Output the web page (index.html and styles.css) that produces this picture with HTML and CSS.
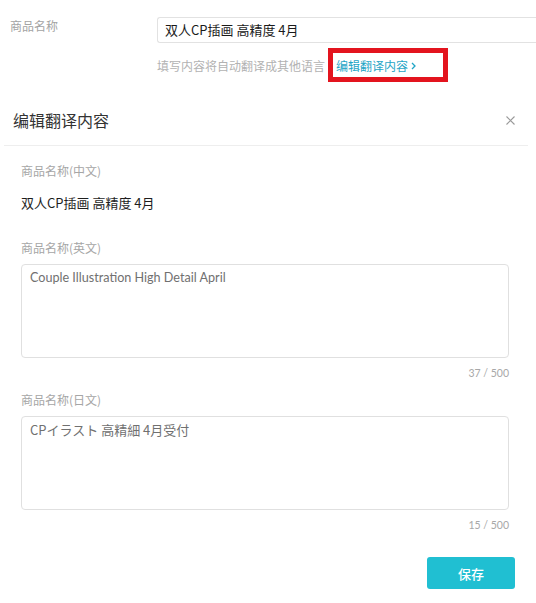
FILE: index.html
```html
<!DOCTYPE html>
<html lang="zh-CN">
<head>
<meta charset="utf-8">
<title>编辑翻译内容</title>
<link rel="stylesheet" href="styles.css">
</head>
<body>
  <div class="field-row">
    <div class="field-label">商品名称</div>
    <div class="field-input">双人CP插画 高精度 4月</div>
  </div>
  <div class="hint-row">
    <span class="hint">填写内容将自动翻译成其他语言</span>
    <span class="link-wrap">
      <a class="link">编辑翻译内容<svg class="chev" width="5" height="8" viewBox="0 0 5 8"><polyline points="1,1 4,4 1,7" fill="none" stroke="currentColor" stroke-width="1.3"/></svg></a>
      <span class="annot"></span>
    </span>
  </div>

  <div class="modal">
    <div class="modal-head">
      <div class="modal-title">编辑翻译内容</div>
      <svg class="close" width="9" height="9" viewBox="0 0 9 9"><path d="M0.5 0.5 L8.5 8.5 M8.5 0.5 L0.5 8.5" stroke="#9a9a9a" stroke-width="1.1" fill="none"/></svg>
    </div>
    <div class="modal-body">
      <div class="lbl lbl-first">商品名称(中文)</div>
      <div class="value">双人CP插画 高精度 4月</div>

      <div class="lbl lbl-gap">商品名称(英文)</div>
      <div class="textarea">Couple Illustration High Detail April</div>
      <div class="counter">37 / 500</div>

      <div class="lbl lbl-after">商品名称(日文)</div>
      <div class="textarea ja">CPイラスト 高精細 4月受付</div>
      <div class="counter">15 / 500</div>
    </div>
    <div class="modal-foot">
      <button class="btn">保存</button>
    </div>
  </div>
</body>
</html>
```
FILE: styles.css
```css
html, body {
  margin: 0;
  padding: 0;
  background: #ffffff;
  overflow: hidden;
}
body {
  font-family: "Noto Sans CJK SC", "Noto Sans", sans-serif;
  color: #333;
  width: 536px;
  height: 603px;
}
.field-row {
  display: flex;
  padding-top: 17px;
}
.field-label {
  flex: none;
  width: 147px;
  padding-left: 10px;
  font-size: 12px;
  line-height: 18px;
  color: #a3a3a3;
}
.field-input {
  flex: 1;
  min-width: 0;
  height: 24px;
  border: 1px solid #e2e2e2;
  border-right: none;
  border-radius: 3px 0 0 3px;
  padding: 0 7px;
  font-size: 13px;
  line-height: 24px;
  color: #1a1a1a;
  white-space: nowrap;
}
.hint-row {
  margin-top: 14px;
  margin-left: 157px;
  font-size: 12px;
  line-height: 18px;
  white-space: nowrap;
  display: flex;
  align-items: center;
}
.hint {
  color: #b2b2b2;
}
.link-wrap {
  position: relative;
  margin-left: 11px;
}
.link {
  color: #1fa5c6;
  display: inline-flex;
  align-items: center;
}
.chev {
  margin-left: 3px;
}
.annot {
  position: absolute;
  left: -8px;
  top: -9px;
  width: 110px;
  height: 24px;
  border: 5px solid #e3141e;
}
.modal {
  margin: 33px 8px 0 4px;
}
.modal-head {
  display: flex;
  justify-content: space-between;
  align-items: center;
  padding: 0 13px 13px 9px;
  border-bottom: 1px solid #eeeeee;
}
.modal-title {
  font-size: 16px;
  line-height: 24px;
  color: #333;
}
.close {
  display: block;
}
.modal-body {
  padding: 0 19px 0 17px;
}
.lbl {
  font-size: 12px;
  line-height: 18px;
  color: #a6a6a6;
}
.lbl-first {
  margin-top: 16px;
}
.value {
  margin-top: 12px;
  font-size: 13px;
  line-height: 21px;
  color: #1e1e1e;
}
.lbl-gap {
  margin-top: 26px;
}
.lbl-after {
  margin-top: 10px;
}
.textarea {
  margin-top: 7px;
  height: 84px;
  border: 1px solid #e0e0e0;
  border-radius: 4px;
  padding: 4px 8px;
  font-family: Lato, "Noto Sans CJK JP", sans-serif;
  font-size: 12.6px;
  line-height: 18px;
  color: #707070;
}
.textarea.ja {
  font-family: "Noto Sans CJK JP", sans-serif;
  font-size: 13px;
}
.counter {
  margin-top: 7px;
  text-align: right;
  font-family: Lato, sans-serif;
  font-size: 10.5px;
  line-height: 16px;
  color: #a8a8a8;
}
.modal-foot {
  display: flex;
  justify-content: flex-end;
  padding: 24px 13px 0 0;
}
.btn {
  width: 88px;
  height: 32px;
  border: none;
  border-radius: 3px;
  background: #20bfd2;
  color: #ffffff;
  font-family: "Noto Sans CJK SC", sans-serif;
  font-size: 13px;
  font-weight: 500;
  padding: 0;
}
```
